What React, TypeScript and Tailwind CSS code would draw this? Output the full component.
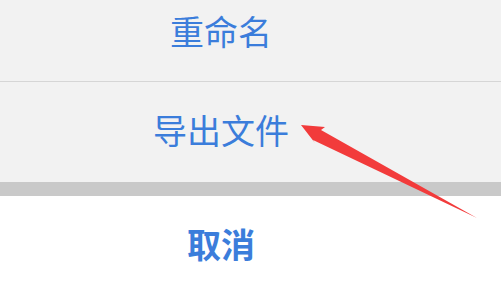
export default function App() {
  const font = { fontFamily: '"Noto Sans CJK SC", "Noto Sans", sans-serif' };
  return (
    <div className="relative w-[501px] h-[281px] overflow-hidden bg-white" style={font}>
      <div className="flex flex-col">
        <div className="h-[82px] bg-[#f2f2f2] border-b border-[#d6d6d6] flex items-start justify-center pr-[59px] pt-[14px]">
          <span className="text-[34px] leading-none text-[#3b7ddb]">重命名</span>
        </div>
        <div className="h-[100px] bg-[#f2f2f2] flex items-start justify-center pr-[59px] pt-[31px]">
          <span className="text-[34px] leading-none text-[#3b7ddb]">导出文件</span>
        </div>
        <div className="h-[14px] bg-[#c9c9c9]" />
        <div className="h-[85px] bg-white flex items-start justify-center pr-[59px] pt-[31px]">
          <span className="text-[34px] leading-none font-bold text-[#3b7ddb]">取消</span>
        </div>
      </div>
      <svg className="absolute left-0 top-0" width="501" height="281" viewBox="0 0 501 281">
        <polygon points="301,125 325,127 321,130 477,218 313,140 315,143" fill="#f23b3b" />
      </svg>
    </div>
  );
}
